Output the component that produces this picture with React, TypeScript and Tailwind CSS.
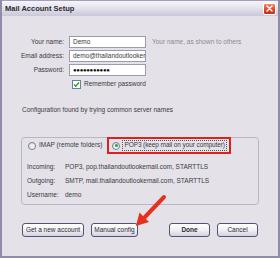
import React from "react";

function Radio({ checked }: { checked?: boolean }) {
  return (
    <span className="flex h-[8px] w-[8px] shrink-0 items-center justify-center rounded-full border border-[#6f7f96] bg-gradient-to-br from-[#d9dde6] to-white">
      {checked && <span className="h-[3px] w-[3px] rounded-full bg-[#2aa12a]" />}
    </span>
  );
}

function Button({ label, bold, width }: { label: string; bold?: boolean; width: string }) {
  return (
    <button
      className={`${width} flex h-[14px] items-center justify-center rounded-[3px] border border-[#545470] bg-gradient-to-b from-white via-[#f1f0f5] to-[#d4d2de] text-[6.5px] leading-none text-[#2a2a35] ${bold ? "font-bold" : ""}`}
    >
      {label}
    </button>
  );
}

function Field({ value }: { value: string }) {
  return (
    <div className="flex h-[12px] w-[77px] items-center overflow-hidden whitespace-nowrap border border-[#9a9bb0] bg-white pl-[3px] leading-none">
      {value}
    </div>
  );
}

export default function App() {
  const labelCls = "flex h-[12px] items-center justify-end leading-none";

  return (
    <div className="relative flex h-[258px] w-[280px] flex-col overflow-hidden border-x-2 border-b-2 border-[#8e8ca8] bg-[#e4e2e8] font-['Liberation_Sans',sans-serif] text-[6.5px] text-[#3a3a42]">
      {/* title bar */}
      <div className="flex h-[16px] shrink-0 items-center justify-between border-t border-[#a19fbb] bg-gradient-to-b from-[#f6f5fa] via-[#e3e1eb] to-[#cac7d8] pl-[3px] pr-[2px]">
        <span className="text-[7.5px] font-bold leading-none text-[#2b2a33]">Mail Account Setup</span>
        <span className="flex h-[12px] w-[13px] items-center justify-center rounded-[2px] border border-white bg-gradient-to-b from-[#f08a6a] via-[#de4a2a] to-[#c2301a]">
          <svg width="7" height="7" viewBox="0 0 7 7">
            <path d="M1 1L6 6M6 1L1 6" stroke="white" strokeWidth="1.4" strokeLinecap="round" />
          </svg>
        </span>
      </div>

      <div className="flex flex-1 flex-col">
        {/* credentials */}
        <div className="mt-[20px] grid grid-cols-[62px_77px_auto] gap-x-[5px] gap-y-[2px]">
          <span className={labelCls}>Your name:</span>
          <Field value="Demo" />
          <span className="ml-[1px] flex h-[12px] items-center leading-none text-[#8b8a92]">
            Your name, as shown to others
          </span>
          <span className={labelCls}>Email address:</span>
          <Field value="demo@thailandoutlooker" />
          <span />
          <span className={labelCls}>Password:</span>
          <div className="flex h-[12px] w-[77px] items-center overflow-hidden border border-[#9a9bb0] bg-white pl-[3px] text-[6px] leading-none tracking-[-0.3px] text-[#111]">
            ●●●●●●●●●●●
          </div>
          <span />
        </div>

        <div className="ml-[70px] mt-[4px] flex h-[9px] items-center gap-[3px] leading-none">
          <span className="flex h-[9px] w-[9px] items-center justify-center border border-[#6f7f96] bg-white">
            <svg width="7" height="7" viewBox="0 0 7 7">
              <path d="M1 3.5L2.8 5.3L6 1.5" stroke="#2f9a2f" strokeWidth="1.4" fill="none" />
            </svg>
          </span>
          <span>Remember password</span>
        </div>

        <p className="ml-[20px] mt-[16px] leading-[10px]">Configuration found by trying common server names</p>

        {/* server group */}
        <div className="ml-[19px] mt-[22px] flex h-[68px] w-[238px] flex-col rounded-[4px] border border-[#b9b7c6]">
          <div className="-mt-[1px] flex h-[17px] items-center">
            <div className="ml-[6px] flex items-center gap-[3px] whitespace-nowrap leading-none">
              <Radio />
              <span>IMAP (remote folders)</span>
            </div>
            <div className="ml-[5px] flex h-[17px] w-[124px] items-center gap-[2px] whitespace-nowrap border-2 border-[#e0201c] pl-[3px] leading-none">
              <Radio checked />
              <span className="border border-dotted border-[#555] px-[1px] py-[1px] tracking-[-0.1px]">
                POP3 (keep mail on your computer)
              </span>
            </div>
          </div>

          <div className="ml-[5px] mt-[6px] grid grid-cols-[38px_auto] whitespace-nowrap leading-[14px]">
            <span>Incoming:</span>
            <span>POP3, pop.thailandoutlookemail.com, STARTTLS</span>
            <span>Outgoing:</span>
            <span>SMTP, mail.thailandoutlookemail.com, STARTTLS</span>
            <span>Username:</span>
            <span>demo</span>
          </div>
        </div>

        {/* buttons */}
        <div className="ml-[20px] mt-[18px] flex items-center">
          <Button label="Get a new account" width="w-[62px]" />
          <Button label="Manual config" width="ml-[7px] w-[47px]" />
          <Button label="Done" bold width="ml-[31px] w-[41px]" />
          <Button label="Cancel" width="ml-[7px] w-[41px]" />
        </div>
      </div>

      {/* red arrow annotation */}
      <svg className="pointer-events-none absolute left-[-2px] top-0" width="280" height="258" viewBox="0 0 280 258">
        <line x1="164" y1="197" x2="145" y2="217" stroke="#e5321f" strokeWidth="4" strokeLinecap="round" />
        <polygon points="136,226 139.5,212.5 149,222" fill="#e5321f" />
      </svg>
    </div>
  );
}
